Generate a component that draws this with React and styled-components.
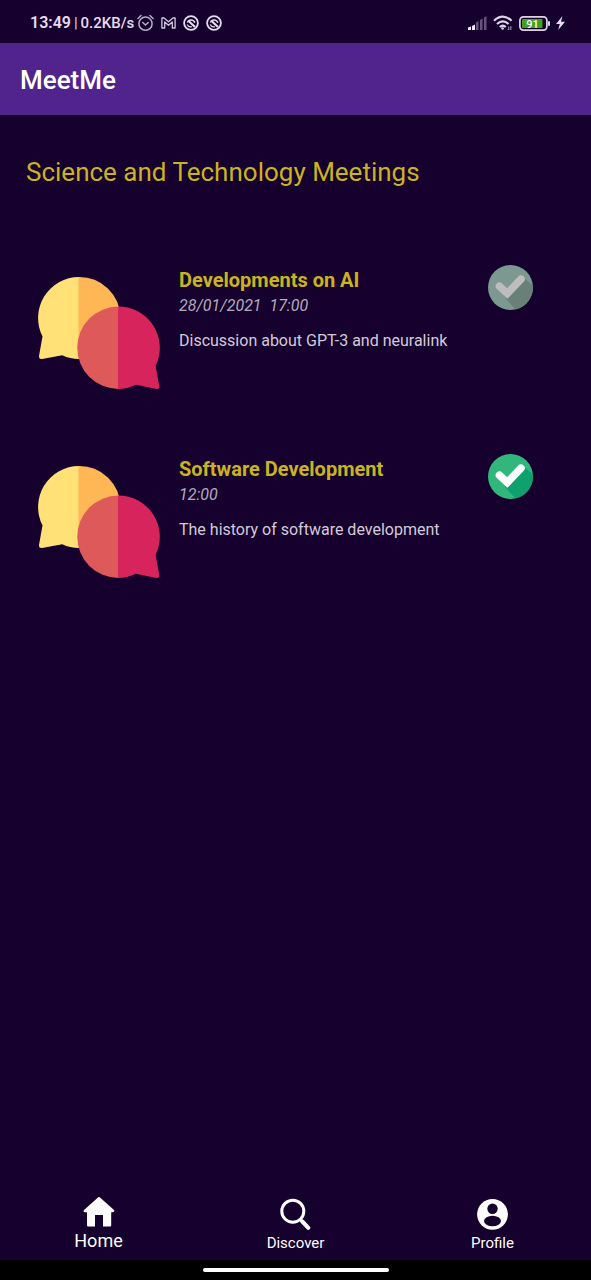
import React, { useState } from "react";
import styled, { createGlobalStyle } from "styled-components";

const GlobalStyle = createGlobalStyle`
  * { box-sizing: border-box; }
  body {
    margin: 0;
    background: #16002e;
    font-family: Roboto, "Liberation Sans", sans-serif;
    color: #ffffff;
  }
  svg { display: block; }
`;

const Screen = styled.div`
  display: flex;
  flex-direction: column;
  min-height: 100vh;
`;

const StatusBar = styled.div`
  display: flex;
  align-items: center;
  justify-content: space-between;
  height: 43px;
  padding: 3px 26px 0 30px;
  color: #e6dcf0;
`;

const StatusGroup = styled.div`
  display: flex;
  align-items: center;
  gap: ${(p) => p.$gap}px;
`;

const StatusText = styled.span`
  font-size: ${(p) => (p.$clock ? 16 : 15)}px;
  font-weight: ${(p) => (p.$light ? 400 : p.$clock ? 600 : 500)};
  line-height: 20px;
`;

const AppBar = styled.header`
  display: flex;
  align-items: center;
  height: 72px;
  padding: 2px 20px 0;
  background: #51238c;
`;

const AppTitle = styled.h1`
  margin: 0;
  font-size: 26px;
  font-weight: 500;
  line-height: 32px;
`;

const Main = styled.main`
  flex: 1;
  padding: 41px 34px 24px 26px;
`;

const SectionTitle = styled.h2`
  margin: 0 0 59px;
  font-size: 26px;
  font-weight: 400;
  line-height: 32px;
  color: #c9b420;
`;

const MeetingList = styled.ul`
  display: flex;
  flex-direction: column;
  gap: 9px;
  margin: 0;
  padding: 0 0 0 5px;
  list-style: none;
`;

const MeetingCard = styled.li`
  display: flex;
  align-items: flex-start;
  height: 180px;
  padding: 17px 23px 0 6px;
  border: 1px solid #14002a;
  border-radius: 4px;
`;

const BubblesIcon = styled.svg`
  flex: none;
  width: 122px;
  height: 114px;
  margin: 11px 19px 0 0;
`;

const MeetingInfo = styled.div`
  flex: 1;
  min-width: 0;
`;

const MeetingName = styled.h3`
  margin: 2px 0 0;
  font-size: 20px;
  font-weight: 700;
  line-height: 26px;
  color: #c9b420;
`;

const MeetingTime = styled.p`
  margin: 0;
  font-size: 16px;
  font-style: italic;
  line-height: 26px;
  white-space: pre;
  color: #b5aabd;
`;

const MeetingText = styled.p`
  margin: 9px 0 0;
  font-size: 16px;
  line-height: 26px;
  color: #d3cbd9;
`;

const JoinButton = styled.button`
  flex: none;
  width: 45px;
  height: 45px;
  padding: 0;
  border: 0;
  border-radius: 50%;
  background: none;
  cursor: pointer;
`;

const BottomNav = styled.nav`
  display: grid;
  grid-template-columns: repeat(3, 1fr);
  height: 68px;
`;

const NavLink = styled.a`
  display: flex;
  flex-direction: column;
  align-items: center;
  gap: ${(p) => (p.$active ? 3 : 2)}px;
  padding-top: ${(p) => (p.$active ? 4 : 6)}px;
  font-size: ${(p) => (p.$active ? 18 : 15)}px;
  line-height: 22px;
  color: #ffffff;
  text-decoration: none;
`;

const GestureBar = styled.div`
  display: flex;
  justify-content: center;
  height: 20px;
  padding-top: 8px;
  background: #000000;
`;

const GestureHandle = styled.div`
  width: 186px;
  height: 4px;
  border-radius: 2px;
  background: #ffffff;
`;

function Bubbles() {
  return (
    <BubblesIcon viewBox="38 276 122 114" aria-hidden="true">
      <path
        fill="#ffe177"
        d="M79 277A41 41 0 0 0 42.500 336.500L39 356Q38.700 359.400 42 359L62.300 355.200Q70 359 79 359Z"
      />
      <path fill="#ffb655" d="M78.500 277A41 41 0 0 1 120.500 318L78.500 359Z" />
      <path fill="#de5a5a" d="M118.500 306.500A41.200 41.200 0 0 0 118.500 389Z" />
      <path
        fill="#d8245c"
        d="M118 306.500A41.300 41.300 0 0 1 155.600 366L159.300 386Q159.300 389.500 156.500 389L136 384.800Q127 389 118 389Z"
      />
    </BubblesIcon>
  );
}

function CheckBadge({ active }) {
  return (
    <svg width="45" height="45" viewBox="0 0 45 45" aria-hidden="true">
      <circle cx="22.500" cy="22.500" r="22.500" fill={active ? "#31b67c" : "#7c9890"} />
      <path
        fill={active ? "#0ea06d" : "#688078"}
        d="M35.500 12.500L44.700 20A22.500 22.500 0 0 1 27.500 44.400L17 33L20 29Z"
      />
      <path
        d="M11.500 21.200L19.300 28.500L33 14.200"
        fill="none"
        stroke={active ? "#ffffff" : "#bdbdbd"}
        strokeWidth="7.600"
        strokeLinecap="round"
      />
    </svg>
  );
}

function Meeting({ name, time, text, joined }) {
  const [active, setActive] = useState(joined);
  return (
    <MeetingCard>
      <Bubbles />
      <MeetingInfo>
        <MeetingName>{name}</MeetingName>
        <MeetingTime>{time}</MeetingTime>
        <MeetingText>{text}</MeetingText>
      </MeetingInfo>
      <JoinButton
        type="button"
        aria-label={`Join ${name}`}
        aria-pressed={active}
        onClick={() => setActive(!active)}
      >
        <CheckBadge active={active} />
      </JoinButton>
    </MeetingCard>
  );
}

const AlarmIcon = () => (
  <svg width="17" height="18" viewBox="0 0 17 18" fill="none" stroke="#b9acc8" strokeWidth="1.500" strokeLinecap="round" aria-hidden="true">
    <circle cx="8.500" cy="9.700" r="6.600" />
    <path d="M1 4.500L4 1.500M16 4.500L13 1.500M5.800 8.500L8.500 11L11.200 8.500" />
  </svg>
);

const MailIcon = () => (
  <svg width="15" height="12" viewBox="0 0 15 12" fill="none" stroke="#d2c6de" strokeWidth="1.300" strokeLinejoin="round" aria-hidden="true">
    <path d="M0.900 11V1H3L7.500 4.800L12 1H14.100V11H11.300V5L7.500 8.300L3.700 5V11Z" />
  </svg>
);

const RingIcon = () => (
  <svg width="16" height="16" viewBox="0 0 16 16" fill="none" stroke="#e6dcf0" aria-hidden="true">
    <circle cx="8" cy="8" r="6.900" strokeWidth="1.800" />
    <path d="M4.300 7.500A4 4 0 0 1 11.800 7.800" strokeWidth="1.400" />
    <path d="M5.600 6L12 12" strokeWidth="2.200" />
    <path d="M4.200 9.500A4 4 0 0 0 8.800 11.700" strokeWidth="1.200" />
  </svg>
);

const SignalIcon = () => (
  <svg width="19" height="14" viewBox="0 0 19 14" aria-hidden="true">
    <path fill="#f0e8f6" d="M0 11.500L3 10.500V14H0ZM4 10L7 8.500V14H4Z" />
    <path fill="#645279" d="M8 6.500L10.500 5V14H8ZM12 4L14.500 2.500V14H12ZM16 1.500L18.500 0V14H16Z" />
  </svg>
);

const WifiIcon = () => (
  <svg width="20" height="16" viewBox="0 0 20 16" fill="none" stroke="#ded4e8" strokeWidth="2.200" aria-hidden="true">
    <path d="M1 5.700Q9.800 -2.500 18.600 5.700M4 9Q9.800 3.700 15.600 9M6.800 12Q9.800 9.500 12.800 12" />
    <circle cx="9.600" cy="13.500" r="1.300" fill="#ded4e8" stroke="none" />
    <path d="M15.800 11.500V15L14.800 14M17.800 15V11.500L18.800 12.500" stroke="#a596b5" strokeWidth="1" />
  </svg>
);

const BatteryIcon = () => (
  <svg width="31" height="15" viewBox="0 0 31 15" aria-hidden="true">
    <rect x="0.900" y="0.900" width="27" height="13.200" rx="3.500" fill="none" stroke="#ded4e8" strokeWidth="1.700" />
    <rect x="3" y="3" width="20.500" height="9" rx="1" fill="#43a01e" />
    <rect x="29" y="5" width="2" height="5" rx="1" fill="#ded4e8" />
    <text x="13.500" y="11.500" fontSize="11" fontWeight="500" textAnchor="middle" fill="#ffffff">91</text>
  </svg>
);

const BoltIcon = () => (
  <svg width="9" height="14" viewBox="0 0 9 14" aria-hidden="true">
    <path fill="#e6dcf0" d="M6.500 0L0 8H3.800L2.200 14L9 5.800H5Z" />
  </svg>
);

const HomeIcon = () => (
  <svg width="32" height="31" viewBox="0 0 32 31" aria-hidden="true">
    <path
      fill="#ffffff"
      d="M14.700 1.700Q16 0.500 17.300 1.700L31 14Q32 16 29.500 16.300H28.200V29.500Q28.200 30.500 27.200 30.500H20V19H12V30.500H5Q4 30.500 4 29.500V16.300H2Q-0.300 16 1 14Z"
    />
  </svg>
);

const SearchIcon = () => (
  <svg width="32" height="32" viewBox="0 0 32 32" fill="none" stroke="#ffffff" aria-hidden="true">
    <circle cx="12.800" cy="13.200" r="11" strokeWidth="3" />
    <path d="M20.600 21.500L22.300 23.500" strokeWidth="3" />
    <path d="M22.300 23.500L28.300 29.800" strokeWidth="4" strokeLinecap="round" />
  </svg>
);

const ProfileIcon = () => (
  <svg width="32" height="32" viewBox="0 0 32 32" aria-hidden="true">
    <circle cx="15.500" cy="16.300" r="15.400" fill="#ffffff" />
    <circle cx="15.500" cy="10.700" r="5.200" fill="#16002e" />
    <ellipse cx="15.500" cy="23" rx="8.500" ry="5.200" fill="#16002e" />
  </svg>
);

const meetings = [
  {
    name: "Developments on AI",
    time: "28/01/2021  17:00",
    text: "Discussion about GPT-3 and neuralink",
    joined: false,
  },
  {
    name: "Software Development",
    time: "12:00",
    text: "The history of software development",
    joined: true,
  },
];

const tabs = [
  { label: "Home", Icon: HomeIcon, active: true },
  { label: "Discover", Icon: SearchIcon },
  { label: "Profile", Icon: ProfileIcon },
];

export default function App() {
  return (
    <Screen>
      <GlobalStyle />
      <StatusBar>
        <StatusGroup $gap={3}>
          <StatusText $clock>13:49</StatusText>
          <StatusText $light>|</StatusText>
          <StatusText>0.2KB/s</StatusText>
          <StatusGroup $gap={7}>
            <AlarmIcon />
            <MailIcon />
            <RingIcon />
            <RingIcon />
          </StatusGroup>
        </StatusGroup>
        <StatusGroup $gap={6}>
          <SignalIcon />
          <WifiIcon />
          <BatteryIcon />
          <BoltIcon />
        </StatusGroup>
      </StatusBar>
      <AppBar>
        <AppTitle>MeetMe</AppTitle>
      </AppBar>
      <Main>
        <SectionTitle>Science and Technology Meetings</SectionTitle>
        <MeetingList>
          {meetings.map((meeting) => (
            <Meeting key={meeting.name} {...meeting} />
          ))}
        </MeetingList>
      </Main>
      <BottomNav>
        {tabs.map(({ label, Icon, active }) => (
          <NavLink
            key={label}
            href={`#${label.toLowerCase()}`}
            $active={active}
            aria-current={active ? "page" : undefined}
          >
            <Icon />
            {label}
          </NavLink>
        ))}
      </BottomNav>
      <GestureBar>
        <GestureHandle />
      </GestureBar>
    </Screen>
  );
}
